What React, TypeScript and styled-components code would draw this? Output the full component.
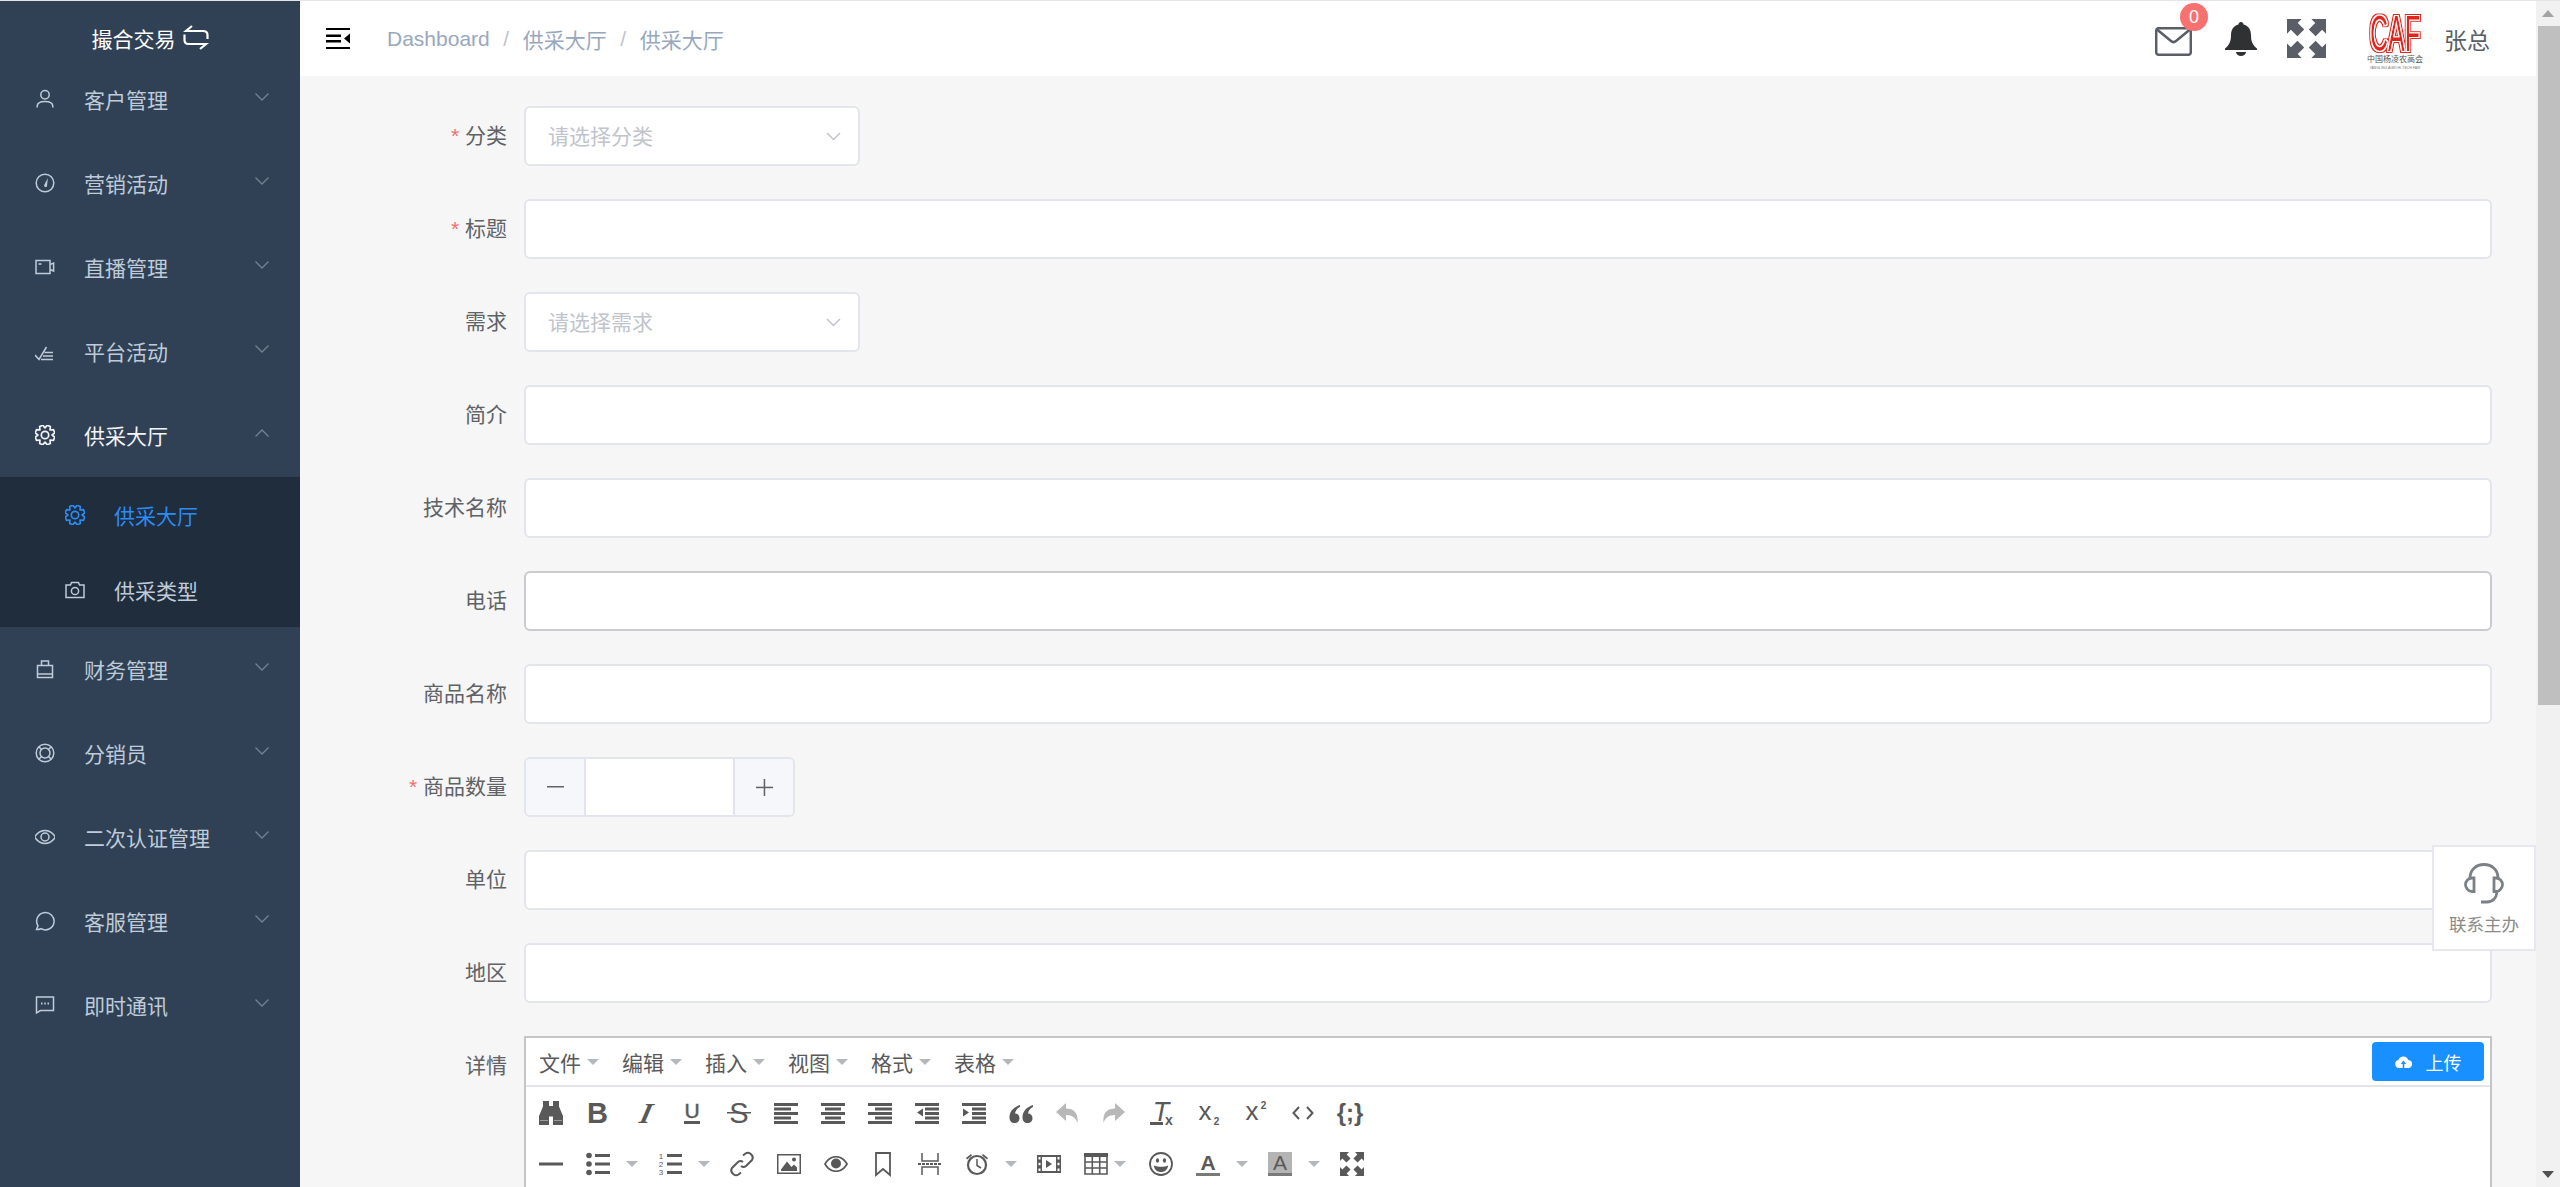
import React from "react";
import styled, { createGlobalStyle } from "styled-components";

const FONT = '"Liberation Sans", "Noto Sans CJK SC", sans-serif';
const TOOL = "#595959";

const GlobalStyle = createGlobalStyle`
  html, body {
    margin: 0;
    height: 100%;
    overflow: hidden;
    background: #f6f6f6;
    font-family: ${FONT};
  }
  * { box-sizing: border-box; }
`;

const Shell = styled.div`
  display: flex;
  height: 1187px;
  border-top: 1px solid #e4e4e4;
  overflow: hidden;
`;

/* sidebar */
const Sidebar = styled.aside`
  width: 300px;
  flex: none;
  background: #304156;
  color: #bfcbd9;
`;
const SideTitle = styled.div`
  height: 56px;
  padding-top: 17px;
  display: flex;
  align-items: center;
  justify-content: center;
  gap: 7px;
  color: #fff;
  font-size: 21px;
`;
const MenuRow = styled.div<{ $open?: boolean }>`
  height: 84px;
  display: flex;
  align-items: center;
  padding: 0 31px 0 35px;
  font-size: 21px;
  color: ${(p) => (p.$open ? "#f4f4f5" : "#bfcbd9")};
`;
const MenuIcon = styled.span`
  width: 20px;
  height: 20px;
  margin-right: 29px;
  display: flex;
  align-items: center;
  justify-content: center;
  flex: none;
`;
const MenuLabel = styled.span`
  flex: 1;
`;
const MenuArrow = styled.svg<{ $up?: boolean }>`
  width: 14px;
  height: 8px;
  margin-top: -4px;
  transform: ${(p) => (p.$up ? "rotate(180deg)" : "none")};
`;
const SubMenu = styled.div`
  background: #1f2d3d;
`;
const SubRow = styled.div<{ $active?: boolean }>`
  height: 75px;
  display: flex;
  align-items: center;
  padding-left: 65px;
  font-size: 21px;
  color: ${(p) => (p.$active ? "#2b8cf7" : "#bfcbd9")};
`;

/* main column */
const Main = styled.main`
  flex: 1;
  min-width: 0;
  display: flex;
  flex-direction: column;
`;
const NavBar = styled.header`
  height: 75px;
  flex: none;
  background: #fff;
  display: flex;
  align-items: center;
  padding: 0 46px 0 26px;
`;
const Crumbs = styled.nav`
  margin-left: 37px;
  display: flex;
  align-items: center;
  font-size: 21px;
  color: #97a8be;
  flex: 1;
`;
const CrumbSep = styled.span`
  color: #c0c4cc;
  margin: 0 13.6px;
`;
const NavRight = styled.div`
  display: flex;
  align-items: center;
`;
const MailWrap = styled.div`
  position: relative;
  width: 37px;
  height: 29px;
  margin: 6px 33px 0 0;
`;
const Badge = styled.span`
  position: absolute;
  top: -24px;
  left: 25px;
  width: 28px;
  height: 28px;
  border-radius: 50%;
  background: #f87171;
  color: #fff;
  font-size: 18px;
  line-height: 28px;
  text-align: center;
`;
const NavName = styled.span`
  margin-left: 18px;
  font-size: 23px;
  color: #5a5e66;
`;

/* form */
const Form = styled.section`
  flex: 1;
  min-height: 0;
  overflow: hidden;
  padding: 30px 44px 0 0;
`;
const Row = styled.div`
  display: flex;
  margin-bottom: 33px;
`;
const Label = styled.label<{ $required?: boolean }>`
  width: 224px;
  flex: none;
  height: 60px;
  line-height: 60px;
  padding-right: 17px;
  text-align: right;
  font-size: 21px;
  color: #606266;
  &::before {
    content: "${(p) => (p.$required ? "* " : "")}";
    color: #f56c6c;
  }
`;
const Input = styled.input<{ $focus?: boolean }>`
  display: block;
  flex: 1;
  min-width: 0;
  height: 60px;
  background: #fff;
  border: 2px solid ${(p) => (p.$focus ? "#cacbd0" : "#e3e5ec")};
  border-radius: 6px;
  outline: none;
`;
const Select = styled.div`
  width: 336px;
  height: 60px;
  background: #fff;
  border: 2px solid #e3e5ec;
  border-radius: 6px;
  padding: 0 17px 3px 22px;
  display: flex;
  align-items: center;
  justify-content: space-between;
  font-size: 21px;
  color: #c0c4cc;
`;
const Stepper = styled.div`
  width: 271px;
  height: 60px;
  display: flex;
  background: #fff;
  border: 2px solid #e3e5ec;
  border-radius: 6px;
  overflow: hidden;
`;
const StepButton = styled.div<{ $right?: boolean }>`
  width: 60px;
  flex: none;
  display: flex;
  align-items: center;
  justify-content: center;
  background: #f5f7fa;
  ${(p) => (p.$right ? "border-left" : "border-right")}: 2px solid #e3e5ec;
`;
const StepMiddle = styled.div`
  flex: 1;
`;

/* editor */
const Editor = styled.div`
  flex: 1;
  min-width: 0;
  height: 400px;
  background: #fff;
  border: 2px solid #c5c5c5;
`;
const EditorMenu = styled.div`
  height: 49px;
  display: flex;
  align-items: center;
  padding: 0 6px 0 13px;
  border-bottom: 2px solid #e2e4e7;
`;
const EditorMenuItem = styled.span`
  display: flex;
  align-items: center;
  margin-right: 23px;
  font-size: 21px;
  color: #595959;
`;
const Caret = styled.i<{ $tight?: boolean; $plain?: boolean }>`
  display: block;
  width: 0;
  height: 0;
  flex: none;
  border-style: solid;
  border-width: 6px 6px 0;
  border-color: #b4b8bc transparent transparent;
  margin-left: ${(p) => (p.$plain || p.$tight ? "6px" : "16px")};
  margin-right: ${(p) => (p.$plain || p.$tight ? "0" : "-3px")};
`;
const UploadButton = styled.button`
  margin-left: auto;
  width: 112px;
  height: 39px;
  border: 0;
  border-radius: 4px;
  background: #1890ff;
  color: #fff;
  font: 18px ${FONT};
  display: flex;
  align-items: center;
  justify-content: center;
  gap: 14px;
`;
const ToolRow = styled.div`
  height: 51px;
  display: flex;
  align-items: center;
  gap: 23px;
  padding-left: 13px;
`;
const ToolItem = styled.span`
  display: flex;
  align-items: center;
`;
const ToolSvg = styled.svg`
  width: 24px;
  height: 24px;
  display: block;
  flex: none;
  overflow: visible;
  color: ${TOOL};
  fill: currentColor;
`;

/* floating contact card and scrollbar */
const ContactCard = styled.aside`
  position: fixed;
  top: 845px;
  right: 24px;
  width: 104px;
  height: 106px;
  background: #fff;
  border: 2px solid #e6e7ef;
  display: flex;
  flex-direction: column;
  align-items: center;
  padding-top: 16px;
  gap: 7px;
  font-size: 17.5px;
  color: #8a8a8a;
`;
const ScrollTrack = styled.div`
  width: 24px;
  flex: none;
  background: #f1f1f1;
  display: flex;
  flex-direction: column;
  align-items: center;
`;
const ScrollUp = styled.i`
  display: block;
  margin-top: 9px;
  border-style: solid;
  border-width: 0 6px 7px;
  border-color: transparent transparent #a3a3a3;
`;
const ScrollThumb = styled.div`
  width: 22px;
  margin: 9px 0 0 2px;
  height: 679px;
  background: #bfbfbf;
`;
const ScrollDown = styled.i`
  display: block;
  margin-top: auto;
  margin-bottom: 9px;
  border-style: solid;
  border-width: 7px 6px 0;
  border-color: #505050 transparent transparent;
`;

/* ---- drawings ---- */
type S = { children: React.ReactNode };
const Line = ({ children }: S) => (
  <svg width="20" height="20" viewBox="0 0 20 20" fill="none" stroke="currentColor" strokeWidth="1.5">
    {children}
  </svg>
);
const UserIcon = () => (
  <Line>
    <circle cx="10" cy="5.8" r="4.2" />
    <path d="M2.2 18.5v-1.2c0-3.2 3.2-4.8 7.8-4.8s7.800 1.600 7.800 4.800v1.200" />
  </Line>
);
const OdometerIcon = () => (
  <Line>
    <circle cx="10" cy="10" r="8.8" />
    <path d="M9 12.5 12.8 5l-.8 8.2a1.6 1.6 0 0 1-3-.7z" fill="currentColor" stroke="none" />
  </Line>
);
const VideoIcon = () => (
  <Line>
    <rect x="1" y="3.5" width="14" height="13" />
    <path d="M15 7.5 18.6 6v8L15 12.5M3.5 7h3" />
  </Line>
);
const FinishedIcon = () => (
  <Line>
    <path d="M0 14l4 4.5L11.5 6M9.5 11.5H18M8 15H18M6 18.5H18" />
  </Line>
);
const CameraIcon = () => (
  <Line>
    <path d="M1 5h4.500l1-2.500h7l1 2.500H19v12.500H1z" />
    <circle cx="10" cy="11" r="3.6" />
  </Line>
);
const BagIcon = () => (
  <Line>
    <path d="M2.5 6.500h15v12h-15zM6.500 6.500V2h7v4.500M2.500 15h15" />
  </Line>
);
const HelpIcon = () => (
  <Line>
    <circle cx="10" cy="10" r="8.8" />
    <circle cx="10" cy="10" r="5" />
    <path d="M3.800 3.800 6.500 6.500M16.200 3.800 13.500 6.500M3.800 16.200l2.700-2.700M16.200 16.200l-2.700-2.700" />
  </Line>
);
const EyeIcon = () => (
  <Line>
    <path d="M-.5 10C2.500 5.500 6 3.500 10 3.500s7.500 2 10.500 6.500c-3 4.500-6.500 6.500-10.500 6.500S2.500 14.500-.5 10z" />
    <circle cx="10" cy="10" r="4" />
  </Line>
);
const ChatRoundIcon = () => (
  <Line>
    <path d="M1.500 18.500 3 14.800A8.700 8.700 0 1 1 6 17.700c-1.500.6-3 .9-4.500.8z" />
  </Line>
);
const ChatSquareIcon = () => (
  <Line>
    <path d="M1.500 2h17v13.500H5.500l-4 2.500z" />
    <path d="M6 8.500h1.500M9.300 8.500h1.500M12.500 8.500H14" strokeWidth="1.8" />
  </Line>
);

// scalloped eight-tooth gear outline
const gearPath = (() => {
  const pts: string[] = [];
  for (let i = 0; i < 8; i++) {
    const a = (i * Math.PI) / 4 + Math.PI / 8;
    [
      [a - 0.17, 10],
      [a + 0.17, 10],
      [a + Math.PI / 8, 7.1],
    ].forEach(([t, r]) => pts.push(`${(10 + r * Math.cos(t)).toFixed(2)} ${(10 + r * Math.sin(t)).toFixed(2)}`));
  }
  return `M${pts.join("L")}z`;
})();
const Gear = () => (
  <svg width="20" height="20" viewBox="0 0 20 20" fill="none" stroke="currentColor" strokeWidth="1.7" strokeLinejoin="round">
    <path d={gearPath} />
    <circle cx="10" cy="10" r="3.7" />
  </svg>
);

const SwapIcon = () => (
  <svg width="26" height="25" viewBox="0 0 26 25" fill="none" stroke="#fff" strokeWidth="2.2">
    <path d="M9 1 3 6h17c3 0 4.500 1.500 4.500 4v4" />
    <path d="M1.500 9.500V15c0 2.500 1.500 4 4 4H23l-6 5" />
  </svg>
);
const Chevron = () => (
  <svg width="15" height="9" viewBox="0 0 15 9" fill="none" stroke="#c0c4cc" strokeWidth="1.5" style={{ marginTop: 3 }}>
    <path d="M1 1l6.500 6.500L14 1" />
  </svg>
);
const Hamburger = () => (
  <svg width="24" height="21" viewBox="0 0 24 21" fill="#000">
    <rect width="24" height="2" />
    <rect y="6.500" width="15" height="2.5" />
    <rect y="12" width="15" height="2.5" />
    <rect y="19" width="24" height="2" />
    <path d="M24 5.500v10L18 10.500z" />
  </svg>
);
const MailIcon = () => (
  <svg width="37" height="29" viewBox="0 0 37 29" fill="none" stroke="#5a5e66" strokeWidth="2.5">
    <rect x="1.200" y="1.200" width="34.600" height="26.600" rx="2.5" />
    <path d="M2 2.500 16 14c1.500 1.300 3.500 1.300 5 0L35 2.500" />
  </svg>
);
const BellIcon = () => (
  <svg width="32" height="34" viewBox="0 0 32 34" fill="#303133" style={{ marginRight: 30 }}>
    <path d="M16 0c-1.500 0-2.500 1-2.500 2.500C8.500 3.800 6 8 6 13c0 6-1.500 10-6 13.500V28h32v-1.500C27.500 23 26 19 26 13c0-5-2.500-9.200-7.500-10.500C18.500 1 17.500 0 16 0z" />
    <path d="M11 30a5 4 0 0 0 10 0z" />
  </svg>
);
const Expand = ({ size, color }: { size: number; color: string }) => (
  <svg width={size} height={size} viewBox="0 0 24 24" fill={color}>
    <path d="M0 0h9L6.600 2.400l4 4-4.200 4.200-4-4L0 9z" />
    <path d="M24 0h-9l2.400 2.400-4 4 4.200 4.200 4-4L24 9z" />
    <path d="M0 24h9l-2.400-2.400 4-4-4.200-4.200-4 4L0 15z" />
    <path d="M24 24h-9l2.400-2.400-4-4 4.200-4.200 4 4L24 15z" />
  </svg>
);
const CafLogo = () => (
  <svg width="60" height="57" viewBox="0 0 60 57" overflow="visible" style={{ marginLeft: 40, marginTop: 5 }}>
    <defs>
      <filter id="caf-stripe" x="-15%" y="-15%" width="130%" height="130%">
        <feMorphology in="SourceAlpha" operator="dilate" radius="3.800 1.800" result="outer" />
        <feFlood floodColor="#e0261c" />
        <feComposite in2="outer" operator="in" result="redEdge" />
        <feMorphology in="SourceAlpha" operator="dilate" radius="2.200 1" result="inner" />
        <feFlood floodColor="#fff" />
        <feComposite in2="inner" operator="in" result="whiteEdge" />
        <feMerge>
          <feMergeNode in="redEdge" />
          <feMergeNode in="whiteEdge" />
          <feMergeNode in="SourceGraphic" />
        </feMerge>
      </filter>
    </defs>
    <g transform="translate(4 38) scale(.5 1)" filter="url(#caf-stripe)">
      <text fontFamily={FONT} fontWeight="400" fontSize="50" fill="#e0261c">CAF</text>
    </g>
    <text x="29" y="49" textAnchor="middle" fontSize="8" fill="#555" fontFamily={FONT}>中国杨凌农高会</text>
    <text x="29" y="55.5" textAnchor="middle" fontSize="3.500" fill="#777" fontFamily={FONT}>YANGLING AGRI HI-TECH FAIR</text>
  </svg>
);
const Headset = () => (
  <svg width="40" height="41" viewBox="0 0 40 41" fill="none" stroke="#7b8085" strokeWidth="2.8">
    <path d="M6 15C6 7 12 1.500 20 1.500S34 7 34 15" />
    <path d="M10 15H8c-4 0-6.500 3.500-6.500 6.500S4 28.500 8 28.500h2z" />
    <path d="M30 15h2c4 0 6.500 3.500 6.500 6.500S36 28.500 32 28.500h-2z" />
    <path d="M33 29c-.5 6-4.500 10-10 10h-6" />
  </svg>
);
const CloudUp = () => (
  <svg width="17" height="12" viewBox="0 0 17 12">
    <path fill="#fff" d="M4 12a4 4 0 0 1-.6-7.900A5.200 5.200 0 0 1 13.300 4 4 4 0 0 1 13 12z" />
    <path fill="#1890ff" d="M8.500 4.500 5.800 8h1.900v4h1.600V8h1.900z" />
  </svg>
);

const bars = (rows: [number, number][]) =>
  rows.map(([x, w], i) => <rect key={i} x={x} y={2 + i * 4.5} width={w} height="3" />);
const Glyph = styled.text`
  font-family: ${FONT};
`;
const toolDrawings: Record<string, React.ReactNode> = {
  find: (
    <>
      <path d="M4 0h6v5h4V0h6v5.500l4 9.500v9H14v-8.500h-4V24H0v-9l4-9.500z" />
      <path d="M1 19.500h8M15 19.500h8" stroke="#fff" strokeWidth=".8" opacity=".5" />
    </>
  ),
  bold: <Glyph x="11.5" y="22" textAnchor="middle" fontSize="29" fontWeight="700">B</Glyph>,
  italic: (
    <text transform="translate(11 22) skewX(-14)" textAnchor="middle" fontSize="29" fontWeight="700" fontStyle="italic" fontFamily='"Liberation Serif", serif'>I</text>
  ),
  underline: (
    <>
      <Glyph x="12" y="17" textAnchor="middle" fontSize="21" stroke="currentColor" strokeWidth=".5">U</Glyph>
      <rect x="4" y="20" width="16" height="3" />
    </>
  ),
  strike: (
    <>
      <Glyph x="12" y="22" textAnchor="middle" fontSize="29">S</Glyph>
      <rect y="11" width="24" height="1.5" />
    </>
  ),
  alignleft: bars([[0, 24], [0, 17], [0, 24], [0, 17], [0, 24]]),
  aligncenter: bars([[0, 24], [4, 16], [0, 24], [4, 16], [0, 24]]),
  alignright: bars([[0, 24], [7, 17], [0, 24], [7, 17], [0, 24]]),
  outdent: (
    <>
      {bars([[0, 24], [10, 14], [10, 14], [10, 14], [0, 24]])}
      <path d="M8 7.500v8L2 11.500z" />
    </>
  ),
  indent: (
    <>
      {bars([[0, 24], [10, 14], [10, 14], [10, 14], [0, 24]])}
      <path d="M1 7.500v8l6-4z" />
    </>
  ),
  quote: (
    <path d="M11 4C5 6 .5 10 .5 16.500.5 20 2.500 22 5.500 22s5-2 5-4.800-2-4.700-4.500-4.700c.6-3 2.500-5.500 5-6.500zM24 4c-6 2-10.500 6-10.500 12.500 0 3.500 2 5.500 5 5.500s5-2 5-4.800-2-4.700-4.500-4.700c.6-3 2.500-5.500 5-6.500z" />
  ),
  undo: <path fill="#b8b8b8" d="M10 2v5.500C18 7.500 22.500 12 21.500 22c-1.500-5-5-8-11.500-8v6L0 11z" />,
  redo: <path fill="#b8b8b8" d="M12 2v5.500C4 7.500-.5 12 .5 22 2 17 5.500 14 12 14v6l10-9z" />,
  removeformat: (
    <>
      <text x="11" y="20" textAnchor="middle" fontSize="27" fontStyle="italic" fontFamily={FONT}>T</text>
      <rect x="0" y="21" width="13" height="3" />
      <Glyph x="19" y="24" textAnchor="middle" fontSize="14" fontWeight="700">x</Glyph>
    </>
  ),
  subscript: (
    <>
      <Glyph x="8" y="19" textAnchor="middle" fontSize="26">x</Glyph>
      <Glyph x="19.500" y="24" textAnchor="middle" fontSize="10" fontWeight="700">2</Glyph>
    </>
  ),
  superscript: (
    <>
      <Glyph x="8" y="19" textAnchor="middle" fontSize="26">x</Glyph>
      <Glyph x="19.500" y="8" textAnchor="middle" fontSize="10" fontWeight="700">2</Glyph>
    </>
  ),
  code: <path d="M8 6 2.500 12 8 18M16 6l5.500 6-5.500 6" fill="none" stroke="currentColor" strokeWidth="2" />,
  codesample: <Glyph x="12" y="20" textAnchor="middle" fontSize="24" fontWeight="700">{"{;}"}</Glyph>,
  hr: <rect y="10.500" width="24" height="3" />,
  bullist: (
    <>
      <circle cx="3" cy="3.500" r="2.8" />
      <circle cx="3" cy="12" r="2.8" />
      <circle cx="3" cy="20.500" r="2.8" />
      <rect x="9" y="2" width="15" height="3" />
      <rect x="9" y="10.500" width="15" height="3" />
      <rect x="9" y="19" width="15" height="3" />
    </>
  ),
  numlist: (
    <>
      <Glyph x="3" y="7" textAnchor="middle" fontSize="8">1</Glyph>
      <Glyph x="3" y="15" textAnchor="middle" fontSize="8">2</Glyph>
      <Glyph x="3" y="23" textAnchor="middle" fontSize="8">3</Glyph>
      <rect x="9" y="2" width="15" height="3" />
      <rect x="9" y="10.500" width="15" height="3" />
      <rect x="9" y="19" width="15" height="3" />
    </>
  ),
  link: (
    <g fill="none" stroke="currentColor" strokeWidth="2">
      <path d="M13 3.500 15.500 1.500c1.500-1 3.500-1 5 .3l1.200 1.200c1.300 1.500 1.300 3.500.3 5L16 14c-1.500 1.300-3.500 1.300-5 0" />
      <path d="M11 20.500 8.500 22.500c-1.500 1-3.500 1-5-.3l-1.200-1.200C1 19.500 1 17.500 2 16l6-6c1.500-1.300 3.500-1.300 5 0" />
    </g>
  ),
  image: (
    <>
      <path fillRule="evenodd" d="M0 2h24v20H0zM1.500 3.500v17h21v-17z" />
      <path d="M4 19v-1.500l6-8 4.500 5.500 2.500-2.500 3 3V19z" />
      <circle cx="17" cy="7.500" r="2" />
    </>
  ),
  preview: (
    <>
      <path fillRule="evenodd" d="M0 12C3 6.500 7 4 12 4s9 2.500 12 8c-3 5.500-7 8-12 8S3 17.500 0 12zm2 0c2.500 4.300 5.800 6.500 10 6.500s7.500-2.200 10-6.500c-2.500-4.300-5.800-6.500-10-6.500S4.500 7.700 2 12z" />
      <circle cx="12" cy="11.500" r="5" />
    </>
  ),
  bookmark: <path d="M5 1h14v22l-7-6-7 6z" fill="none" stroke="currentColor" strokeWidth="1.8" />,
  pagebreak: (
    <>
      <path d="M4 1v8h16V1M4 23v-8h16v8" fill="none" stroke="currentColor" strokeWidth="1.5" />
      <path d="M0 12h24" fill="none" stroke="currentColor" strokeWidth="2" strokeDasharray="3 1" />
    </>
  ),
  alarm: (
    <>
      <circle cx="12" cy="13" r="9" fill="none" stroke="currentColor" strokeWidth="2.2" />
      <path d="M12 7v6.500l4 2.500" fill="none" stroke="currentColor" strokeWidth="1.5" />
      <path d="M1 6 6 2 7 3.500 2 7.500zM23 6l-5-4-1 1.500 5 4z" />
    </>
  ),
  media: (
    <>
      <path fillRule="evenodd" d="M0 3h24v18H0zM5 5v14h14V5z" />
      <path d="M9 8v8l6-4z" />
      <path d="M1.500 5h2v2.500h-2zM1.500 10.700h2v2.500h-2zM1.500 16.500h2V19h-2zM20.500 5h2v2.500h-2zM20.500 10.700h2v2.500h-2zM20.500 16.500h2V19h-2z" fill="#fff" />
    </>
  ),
  table: (
    <>
      <rect y="1" width="24" height="4" />
      <path d="M1 2v20h22V2M1 10h22M1 16h22M8.300 4v18M15.700 4v18" fill="none" stroke="currentColor" strokeWidth="1.6" />
    </>
  ),
  emoticon: (
    <>
      <circle cx="12" cy="12" r="11" fill="none" stroke="currentColor" strokeWidth="1.8" />
      <ellipse cx="8.500" cy="8.500" rx="1.6" ry="2.2" />
      <ellipse cx="15.500" cy="8.500" rx="1.6" ry="2.2" />
      <path d="M4.800 13.500c4 1.800 10.400 1.800 14.400 0C18.500 18 15.500 20 12 20s-6.500-2-7.200-6.500z" />
    </>
  ),
  forecolor: (
    <>
      <Glyph x="12" y="18" textAnchor="middle" fontSize="21" fontWeight="700">A</Glyph>
      <rect y="21" width="24" height="3" fill="#7a7a7a" />
    </>
  ),
  backcolor: (
    <>
      <rect width="24" height="24" fill="#b4b4b4" />
      <Glyph x="12" y="18" textAnchor="middle" fontSize="21">A</Glyph>
      <rect y="21" width="24" height="3" fill="#7a7a7a" />
    </>
  ),
};
const Tool = ({ name }: { name: string }) => <ToolSvg viewBox="0 0 24 24">{toolDrawings[name]}</ToolSvg>;

const sideBefore = [
  { label: "客户管理", icon: <UserIcon /> },
  { label: "营销活动", icon: <OdometerIcon /> },
  { label: "直播管理", icon: <VideoIcon /> },
  { label: "平台活动", icon: <FinishedIcon /> },
];
const sideAfter = [
  { label: "财务管理", icon: <BagIcon /> },
  { label: "分销员", icon: <HelpIcon /> },
  { label: "二次认证管理", icon: <EyeIcon /> },
  { label: "客服管理", icon: <ChatRoundIcon /> },
  { label: "即时通讯", icon: <ChatSquareIcon /> },
];
const firstRow = [
  "find", "bold", "italic", "underline", "strike", "alignleft", "aligncenter", "alignright", "outdent",
  "indent", "quote", "undo", "redo", "removeformat", "subscript", "superscript", "code", "codesample",
];
const secondRow: { name: string; caret?: "wide" | "tight" }[] = [
  { name: "hr" },
  { name: "bullist", caret: "wide" },
  { name: "numlist", caret: "wide" },
  { name: "link" },
  { name: "image" },
  { name: "preview" },
  { name: "bookmark" },
  { name: "pagebreak" },
  { name: "alarm", caret: "wide" },
  { name: "media" },
  { name: "table", caret: "tight" },
  { name: "emoticon" },
  { name: "forecolor", caret: "wide" },
  { name: "backcolor", caret: "wide" },
];
const editorMenus = ["文件", "编辑", "插入", "视图", "格式", "表格"];

const Arrow = ({ up }: { up?: boolean }) => (
  <MenuArrow $up={up} viewBox="0 0 14 8" fill="none" stroke="#75818f" strokeWidth="1.3">
    <path d="M.5.500 7 7l6.500-6.500" />
  </MenuArrow>
);
const SideItem = ({ label, icon }: { label: string; icon: React.ReactNode }) => (
  <MenuRow>
    <MenuIcon>{icon}</MenuIcon>
    <MenuLabel>{label}</MenuLabel>
    <Arrow />
  </MenuRow>
);

export default function App() {
  return (
    <>
      <GlobalStyle />
      <Shell>
        <Sidebar>
          <SideTitle>
            撮合交易
            <SwapIcon />
          </SideTitle>
          {sideBefore.map((m) => (
            <SideItem key={m.label} {...m} />
          ))}
          <MenuRow $open>
            <MenuIcon>
              <Gear />
            </MenuIcon>
            <MenuLabel>供采大厅</MenuLabel>
            <Arrow up />
          </MenuRow>
          <SubMenu>
            <SubRow $active>
              <MenuIcon>
                <Gear />
              </MenuIcon>
              供采大厅
            </SubRow>
            <SubRow>
              <MenuIcon>
                <CameraIcon />
              </MenuIcon>
              供采类型
            </SubRow>
          </SubMenu>
          {sideAfter.map((m) => (
            <SideItem key={m.label} {...m} />
          ))}
        </Sidebar>

        <Main>
          <NavBar>
            <Hamburger />
            <Crumbs>
              Dashboard
              <CrumbSep>/</CrumbSep>
              供采大厅
              <CrumbSep>/</CrumbSep>
              供采大厅
            </Crumbs>
            <NavRight>
              <MailWrap>
                <MailIcon />
                <Badge>0</Badge>
              </MailWrap>
              <BellIcon />
              <Expand size={39} color="#5a5e66" />
              <CafLogo />
              <NavName>张总</NavName>
            </NavRight>
          </NavBar>

          <Form>
            <Row>
              <Label $required>分类</Label>
              <Select>
                请选择分类
                <Chevron />
              </Select>
            </Row>
            <Row>
              <Label $required>标题</Label>
              <Input />
            </Row>
            <Row>
              <Label>需求</Label>
              <Select>
                请选择需求
                <Chevron />
              </Select>
            </Row>
            <Row>
              <Label>简介</Label>
              <Input />
            </Row>
            <Row>
              <Label>技术名称</Label>
              <Input />
            </Row>
            <Row>
              <Label>电话</Label>
              <Input $focus />
            </Row>
            <Row>
              <Label>商品名称</Label>
              <Input />
            </Row>
            <Row>
              <Label $required>商品数量</Label>
              <Stepper>
                <StepButton>
                  <svg width="17" height="2" viewBox="0 0 17 2" fill="#606266">
                    <rect width="17" height="1.5" />
                  </svg>
                </StepButton>
                <StepMiddle />
                <StepButton $right>
                  <svg width="17" height="17" viewBox="0 0 17 17" fill="#606266">
                    <rect y="7.700" width="17" height="1.5" />
                    <rect x="7.700" width="1.5" height="17" />
                  </svg>
                </StepButton>
              </Stepper>
            </Row>
            <Row>
              <Label>单位</Label>
              <Input />
            </Row>
            <Row>
              <Label>地区</Label>
              <Input />
            </Row>
            <Row>
              <Label>详情</Label>
              <Editor>
                <EditorMenu>
                  {editorMenus.map((m) => (
                    <EditorMenuItem key={m}>
                      {m}
                      <Caret $plain />
                    </EditorMenuItem>
                  ))}
                  <UploadButton>
                    <CloudUp />
                    上传
                  </UploadButton>
                </EditorMenu>
                <ToolRow>
                  {firstRow.map((t) => (
                    <Tool key={t} name={t} />
                  ))}
                </ToolRow>
                <ToolRow>
                  {secondRow.map((t) => (
                    <ToolItem key={t.name}>
                      <Tool name={t.name} />
                      {t.caret && <Caret $tight={t.caret === "tight"} />}
                    </ToolItem>
                  ))}
                  <Expand size={24} color={TOOL} />
                </ToolRow>
              </Editor>
            </Row>
          </Form>
        </Main>

        <ScrollTrack>
          <ScrollUp />
          <ScrollThumb />
          <ScrollDown />
        </ScrollTrack>
      </Shell>

      <ContactCard>
        <Headset />
        联系主办
      </ContactCard>
    </>
  );
}
